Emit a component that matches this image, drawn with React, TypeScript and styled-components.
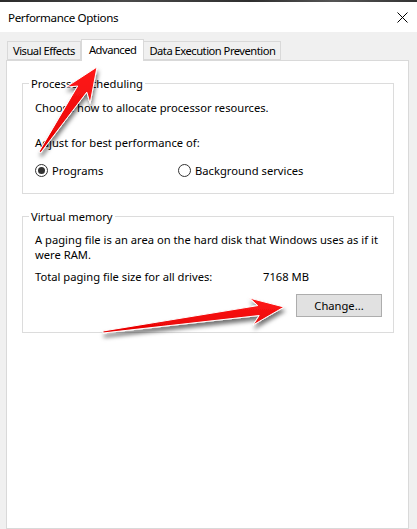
import React from "react";
import styled, { createGlobalStyle } from "styled-components";

const GlobalStyle = createGlobalStyle`
  html, body { margin: 0; padding: 0; }
  body {
    background: #f0f0f0;
    font-family: "Noto Sans", "Segoe UI", Arial, sans-serif;
    font-size: 11.2px;
    color: #000;
    overflow: hidden;
  }
  * { box-sizing: border-box; }
`;

const Window = styled.div`
  position: relative;
  width: 417px;
  height: 529px;
  overflow: hidden;
  background: #f0f0f0;
  display: flex;
  flex-direction: column;
`;

const TopStrip = styled.div`
  height: 2px;
  background: linear-gradient(90deg, #2b2b2b, #4a4a4a 30%, #2e2e2e 60%, #555 80%, #333);
`;

const TitleBar = styled.div`
  height: 30px;
  background: #fff;
  display: flex;
  align-items: center;
  justify-content: space-between;
  padding: 0 9px 0 8px;
`;

const Title = styled.span`
  font-size: 11.6px;
  letter-spacing: -0.35px;
  line-height: 15px;
`;

const CloseIcon = styled.svg`
  width: 11px;
  height: 11px;
  display: block;
`;

const Content = styled.div`
  flex: 1;
  display: flex;
  flex-direction: column;
  padding: 7px 8px 0 6px;
`;

const TabRow = styled.div`
  display: flex;
  align-items: flex-end;
  height: 21px;
  padding-left: 1px;
  position: relative;
  z-index: 1;
`;

const Tab = styled.div<{ $active?: boolean }>`
  height: ${(p) => (p.$active ? "22px" : "19px")};
  margin-bottom: ${(p) => (p.$active ? "-1px" : "0")};
  padding: 0 ${(p) => (p.$active ? "7px" : "5px")};
  margin-left: ${(p) => (p.$active ? "0" : "-1px")};
  background: ${(p) => (p.$active ? "#fff" : "#f0f0f0")};
  border: 1px solid #d9d9d9;
  border-bottom: ${(p) => (p.$active ? "none" : "1px solid #d9d9d9")};
  display: flex;
  align-items: center;
  line-height: 15px;
  letter-spacing: -0.5px;
  white-space: nowrap;
  padding-bottom: ${(p) => (p.$active ? "2px" : "0")};
  &:first-child { margin-left: 0; }
`;

const Panel = styled.div`
  flex: 1;
  background: #fff;
  border: 1px solid #d9d9d9;
  padding: 15px 14px 0 15px;
  display: flex;
  flex-direction: column;
  gap: 15px;
`;

const Group = styled.fieldset`
  margin: 0;
  border: 1px solid #dcdcdc;
  padding: 0 12px 15px 12px;
  min-width: 0;
`;

const Legend = styled.legend`
  padding: 0 2px;
  margin-left: -6px;
  line-height: 15px;
`;

const Line = styled.div<{ $mt?: number }>`
  margin-top: ${(p) => p.$mt ?? 0}px;
  line-height: 15px;
  white-space: nowrap;
`;

const RadioRow = styled.div`
  margin-top: 13px;
  display: flex;
  align-items: center;
  line-height: 15px;
`;

const RadioLabel = styled.label<{ $w?: number }>`
  display: flex;
  align-items: center;
  gap: 4px;
  width: ${(p) => (p.$w ? `${p.$w}px` : "auto")};
`;

const RadioCircle = styled.span<{ $checked?: boolean }>`
  width: 13px;
  height: 13px;
  border-radius: 50%;
  border: 1px solid #333;
  background: #fff;
  display: flex;
  align-items: center;
  justify-content: center;
  &::after {
    content: "";
    width: 7px;
    height: 7px;
    border-radius: 50%;
    background: ${(p) => (p.$checked ? "#333" : "transparent")};
  }
`;

const TotalRow = styled.div`
  margin-top: 7px;
  display: grid;
  grid-template-columns: 228px auto;
  line-height: 15px;
  white-space: nowrap;
`;

const ButtonRow = styled.div`
  margin-top: 10px;
  display: flex;
  justify-content: flex-end;
`;

const Button = styled.button`
  width: 86px;
  height: 23px;
  background: #e1e1e1;
  border: 1px solid #adadad;
  font-family: inherit;
  font-size: 11.2px;
  color: #000;
  padding: 0;
  margin-right: -1px;
`;

const Overlay = styled.svg`
  position: absolute;
  left: 0;
  top: 0;
  width: 417px;
  height: 529px;
  pointer-events: none;
`;

type Pt = [number, number];

function arrowPoints(
  tail: Pt,
  tip: Pt,
  headLen: number,
  headHalf: number,
  neckHalf: number,
  tailHalf: number
): string {
  const dx = tip[0] - tail[0];
  const dy = tip[1] - tail[1];
  const len = Math.hypot(dx, dy);
  const ux = dx / len;
  const uy = dy / len;
  const nx = -uy;
  const ny = ux;
  const bx = tip[0] - ux * headLen;
  const by = tip[1] - uy * headLen;
  const nbx = tip[0] - ux * (headLen * 0.78);
  const nby = tip[1] - uy * (headLen * 0.78);
  const pts: Pt[] = [
    [tail[0] + nx * tailHalf, tail[1] + ny * tailHalf],
    [nbx + nx * neckHalf, nby + ny * neckHalf],
    [bx + nx * headHalf, by + ny * headHalf],
    tip,
    [bx - nx * headHalf, by - ny * headHalf],
    [nbx - nx * neckHalf, nby - ny * neckHalf],
    [tail[0] - nx * tailHalf, tail[1] - ny * tailHalf],
  ];
  return pts.map((p) => `${p[0].toFixed(1)},${p[1].toFixed(1)}`).join(" ");
}

const Arrows: React.FC = () => (
  <Overlay viewBox="0 0 417 529">
    <defs>
      <filter id="shadow" x="-20%" y="-20%" width="140%" height="160%">
        <feDropShadow dx="1" dy="4" stdDeviation="2" floodColor="#000" floodOpacity="0.55" />
      </filter>
      <linearGradient id="red" x1="0" y1="0" x2="0" y2="1">
        <stop offset="0" stopColor="#ff1a1a" />
        <stop offset="1" stopColor="#e60000" />
      </linearGradient>
    </defs>
    <polygon
      points={arrowPoints([40, 152], [97, 67], 34, 14.5, 5.5, 1)}
      fill="url(#red)"
      stroke="#fff"
      strokeWidth="1"
      strokeLinejoin="round"
      filter="url(#shadow)"
    />
    <polygon
      points={arrowPoints([103, 332], [284, 307], 33, 13.5, 5, 1)}
      fill="url(#red)"
      stroke="#fff"
      strokeWidth="1"
      strokeLinejoin="round"
      filter="url(#shadow)"
    />
  </Overlay>
);

export default function App() {
  return (
    <>
      <GlobalStyle />
      <Window>
        <TopStrip />
        <TitleBar>
          <Title>Performance Options</Title>
          <CloseIcon viewBox="0 0 11 11">
            <path d="M0.5 0.5 L10.5 10.5 M10.5 0.5 L0.5 10.5" stroke="#000" strokeWidth="1" fill="none" />
          </CloseIcon>
        </TitleBar>
        <Content>
          <TabRow>
            <Tab>Visual Effects</Tab>
            <Tab $active>Advanced</Tab>
            <Tab>Data Execution Prevention</Tab>
          </TabRow>
          <Panel>
            <Group>
              <Legend>Processor scheduling</Legend>
              <Line $mt={9}>Choose how to allocate processor resources.</Line>
              <Line $mt={20}>Adjust for best performance of:</Line>
              <RadioRow>
                <RadioLabel $w={143}>
                  <RadioCircle $checked />
                  Programs
                </RadioLabel>
                <RadioLabel>
                  <RadioCircle />
                  Background services
                </RadioLabel>
              </RadioRow>
            </Group>
            <Group>
              <Legend>Virtual memory</Legend>
              <Line $mt={8}>
                A paging file is an area on the hard disk that Windows uses as if it
                <br />
                were RAM.
              </Line>
              <TotalRow>
                <span>Total paging file size for all drives:</span>
                <span>7168 MB</span>
              </TotalRow>
              <ButtonRow>
                <Button>Change...</Button>
              </ButtonRow>
            </Group>
          </Panel>
        </Content>
        <Arrows />
      </Window>
    </>
  );
}
